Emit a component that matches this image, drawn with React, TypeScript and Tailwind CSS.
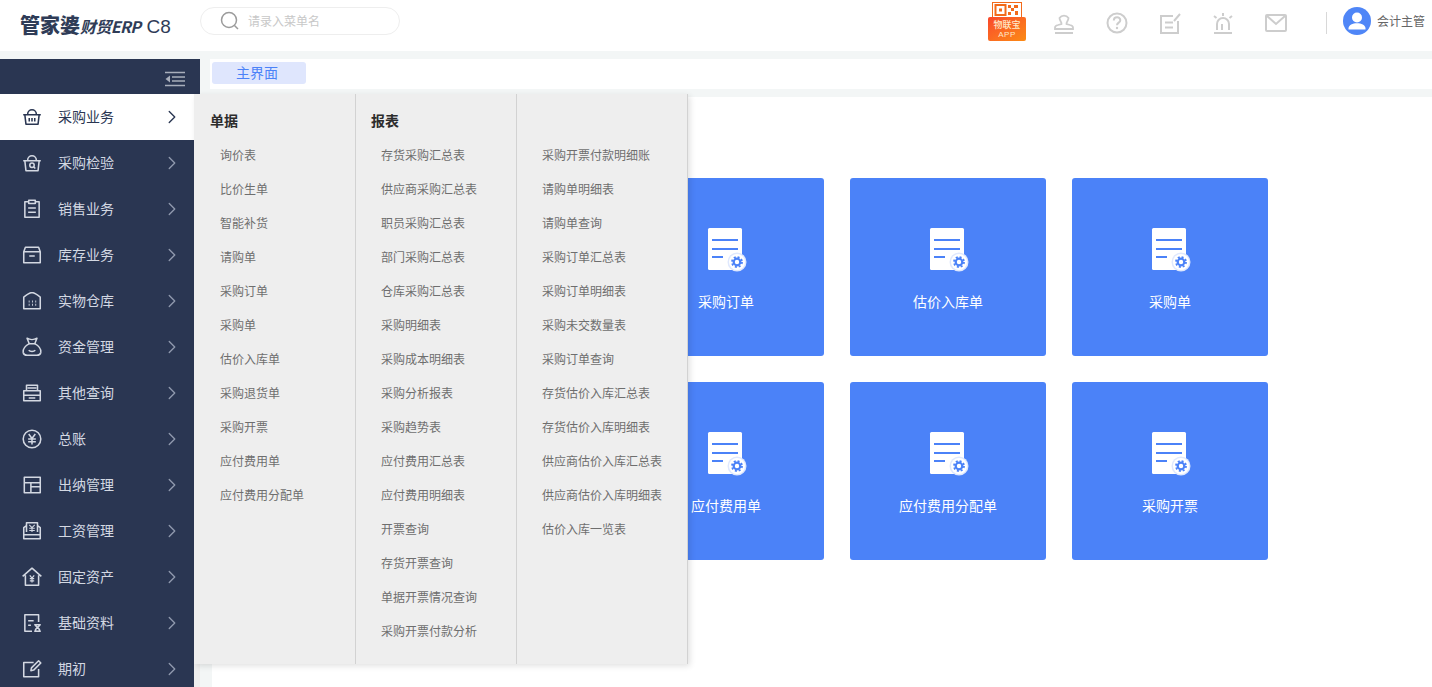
import type { ReactNode } from "react";
import { ChevronRight } from "lucide-react";

const sideIcons: Record<string, ReactNode> = {
  basket: (
    <>
      <path d="M2 8h16M3.500 8l1 8.500h11l1-8.500M6 8c0-6 8-6 8 0" />
      <path d="M7.500 11v3M10 11v3M12.500 11v3" />
    </>
  ),
  basketSearch: (
    <>
      <path d="M2 8h16M3.500 8l1 9h11l1-9M6 8c0-6 8-6 8 0" />
      <circle cx="10" cy="12" r="2" />
      <path d="M11.500 13.500l1.500 1.500" />
    </>
  ),
  clipboard: (
    <>
      <path d="M7 3.500H3.500v14h13v-14H13" />
      <path d="M7 2h6v3H7zM6.500 9h7M6.500 13h7" />
    </>
  ),
  box: <path d="M4 3h12l1.500 4h-15zM2.500 7h15v10h-15zM7.500 11h5" />,
  warehouse: (
    <>
      <path d="M2.500 6.500C5 4.500 7 3 9 2.500h2c2 .5 4 2 6.500 4V17h-15z" />
      <path d="M7 10.500h.8M10 10.500h.8M13 10.500h.8M7 13.500h.8M10 13.500h.8M13 13.500h.8" strokeWidth="1.800" />
    </>
  ),
  bag: (
    <>
      <path d="M5.500 2c2.500 1.500 6.500 1.500 9 0L12.500 7h-5z" />
      <path d="M7.500 7C4 9 1.500 12 2 15c.4 2 2 2.500 3.500 2.500h9c1.500 0 3.100-.5 3.500-2.500.5-3-2-6-5.500-8" />
      <path d="M7 13c1.500 1.500 4.500 1.500 6 0" />
    </>
  ),
  printer: <path d="M5 8V3h10v5M2.500 8h15v9h-15zM2.500 12h15M7 14.500h6M6 5.500h8" />,
  yen: (
    <>
      <circle cx="10" cy="10" r="8" />
      <path d="M7 5.500l3 4 3-4M6.500 10h7M6.500 12.500h7M10 9.500v5.500" />
    </>
  ),
  layout: <path d="M3 3h14.500v14H3zM3 8h14.500M9 8v9M9 11.500h8.500" />,
  salary: (
    <>
      <path d="M5 11V2.500h10V11M5 5L2.500 7v10h15V7L15 5M2.500 13.500h15" />
      <path d="M7.500 4.500l2.500 2.500 2.500-2.500M7.500 7.500h5M7.500 9.500h5M10 7v4" strokeWidth="1" />
    </>
  ),
  house: (
    <>
      <path d="M1.500 9.500L10 2l8.500 7.500M4 8.500V17.500h12V8.500" />
      <path d="M8 8.500l2 2.500 2-2.500M8 11.500h4M8 13.500h4M10 11v4" strokeWidth="1.100" />
    </>
  ),
  docTimer: (
    <>
      <path d="M16 9V2.500H3.500v15H10" />
      <path d="M6.500 8h5M6.500 12h2.500M12 11.500h6M12 17.500h6M13 11.500c0 2 4 2.500 4 6M17 11.500c0 2-4 2.500-4 6" />
    </>
  ),
  edit: (
    <>
      <path d="M16 10v7H2.500V4h9" />
      <path d="M9 11.500l.5-2.500L16 2.500l2 2-6.500 6.500z" />
    </>
  ),
};

const sideItems = [
  ["采购业务", "basket"],
  ["采购检验", "basketSearch"],
  ["销售业务", "clipboard"],
  ["库存业务", "box"],
  ["实物仓库", "warehouse"],
  ["资金管理", "bag"],
  ["其他查询", "printer"],
  ["总账", "yen"],
  ["出纳管理", "layout"],
  ["工资管理", "salary"],
  ["固定资产", "house"],
  ["基础资料", "docTimer"],
  ["期初", "edit"],
];

const billItems = [
  "询价表",
  "比价生单",
  "智能补货",
  "请购单",
  "采购订单",
  "采购单",
  "估价入库单",
  "采购退货单",
  "采购开票",
  "应付费用单",
  "应付费用分配单",
];

const reportItems = [
  "存货采购汇总表",
  "供应商采购汇总表",
  "职员采购汇总表",
  "部门采购汇总表",
  "仓库采购汇总表",
  "采购明细表",
  "采购成本明细表",
  "采购分析报表",
  "采购趋势表",
  "应付费用汇总表",
  "应付费用明细表",
  "开票查询",
  "存货开票查询",
  "单据开票情况查询",
  "采购开票付款分析",
];

const moreReportItems = [
  "采购开票付款明细账",
  "请购单明细表",
  "请购单查询",
  "采购订单汇总表",
  "采购订单明细表",
  "采购未交数量表",
  "采购订单查询",
  "存货估价入库汇总表",
  "存货估价入库明细表",
  "供应商估价入库汇总表",
  "供应商估价入库明细表",
  "估价入库一览表",
];

const cards = ["采购订单", "估价入库单", "采购单", "应付费用单", "应付费用分配单", "采购开票"];

function SideIcon({ name }: { name: string }) {
  return (
    <svg
      viewBox="0 0 20 20"
      fill="none"
      stroke="currentColor"
      strokeWidth="1.400"
      strokeLinejoin="round"
      className="h-[22px] w-[22px] shrink-0"
    >
      {sideIcons[name]}
    </svg>
  );
}

function DocIcon() {
  return (
    <svg viewBox="0 0 40 44" className="ml-[2px] h-[44px] w-[40px]">
      <rect x="1" y="0" width="34" height="42" rx="1.500" fill="#fff" />
      <path d="M5 12h26M5 21h26M5 29h11" stroke="#4b82f8" strokeWidth="2" />
      <circle cx="30" cy="34" r="9.500" fill="#dfe8fd" />
      <circle cx="30" cy="34" r="8" fill="#fff" />
      <circle cx="30" cy="34" r="3.300" fill="none" stroke="#4b82f8" strokeWidth="2.200" />
      <circle cx="30" cy="34" r="5" fill="none" stroke="#4b82f8" strokeWidth="1.800" strokeDasharray="2 1.930" />
    </svg>
  );
}

function HeaderIcon({ children }: { children: ReactNode }) {
  return (
    <svg
      viewBox="0 0 24 24"
      fill="none"
      stroke="#cdcdcd"
      strokeWidth="2"
      className="h-[24px] w-[24px] shrink-0"
    >
      {children}
    </svg>
  );
}

function MenuColumn({
  title,
  items,
  width,
  headIndent,
  indent,
}: {
  title: string;
  items: string[];
  width: string;
  headIndent: string;
  indent: string;
}) {
  return (
    <div className={`${width} border-r border-[#d2d2d2] pt-[15px]`}>
      <div className={`h-[22px] ${headIndent} text-[14px] leading-[22px] font-bold text-[#2c2c2c]`}>{title}&nbsp;</div>
      <ul className={`mt-[7px] ${indent}`}>
        {items.map((item) => (
          <li key={item} className="h-[34px] text-[12px] leading-[34px] whitespace-nowrap text-[#6e6e6e]">
            {item}
          </li>
        ))}
      </ul>
    </div>
  );
}

export default function App() {
  return (
    <div
      className="relative flex h-[687px] w-[1432px] flex-col overflow-hidden bg-[#f3f6f6]"
      style={{ fontFamily: '"Noto Sans CJK SC", "Liberation Sans", sans-serif' }}
    >
      <header className="flex h-[51px] shrink-0 items-center bg-white">
        <div className="ml-[20px] flex w-[180px] items-baseline whitespace-nowrap text-[#2f3c57]">
          <span className="text-[20px] leading-none font-black">管家婆</span>
          <span className="text-[16px] leading-none font-bold tracking-[-0.6px] italic">财贸ERP</span>
          <span className="ml-[6px] text-[19px] leading-none font-normal" style={{ fontFamily: '"Liberation Sans", sans-serif' }}>
            C8
          </span>
        </div>
        <div className="mb-[9px] flex h-[28px] w-[200px] items-center rounded-full border border-[#eee] pl-[19px]">
          <svg viewBox="0 0 20 20" fill="none" stroke="#9b9b9b" strokeWidth="1.500" className="h-[20px] w-[20px]">
            <circle cx="9" cy="9" r="7.500" />
            <path d="M14.500 14.500l3.500 3.500" />
          </svg>
          <span className="ml-[8px] text-[12px] text-[#c8c8c8]">请录入菜单名</span>
        </div>
        <div className="mb-[10px] ml-[588px] flex h-[38px] w-[38px] shrink-0 flex-col items-center">
          <div className="flex h-[17px] w-[30px] shrink-0 items-start justify-center bg-[#f26a1b] pt-[1px]">
            <svg viewBox="0 0 28 15" className="h-[15px] w-[28px]">
              <rect width="28" height="15" fill="#fff" />
              <rect x="2.500" y="2" width="10" height="10" fill="none" stroke="#f26a1b" strokeWidth="2" />
              <rect x="6" y="5.500" width="3" height="3" fill="#f26a1b" />
              <path d="M15 2h3v3h-3zM21 2h4v3h-4zM18 5h3v3h-3zM22 8h3v4h-3zM15 9h3v3h-3z" fill="#f26a1b" />
            </svg>
          </div>
          <div className="-mt-[2px] flex h-[24px] w-[38px] shrink-0 flex-col items-center justify-center rounded-[2px] bg-gradient-to-br from-[#f9452a] to-[#fb8a12] text-[#ffe9c8]">
            <span className="text-[9px] leading-[11px] font-medium">物联宝</span>
            <span className="text-[8px] leading-[9px] tracking-[0.5px]" style={{ fontFamily: '"Liberation Sans", sans-serif' }}>
              APP
            </span>
          </div>
        </div>
        <div className="mb-[6px] ml-[26px] flex items-center gap-[29px]">
          <HeaderIcon>
            <path d="M3 22h18" />
            <path d="M3 18h18v-1.500c0-1.500-1-2-3-2.500l-3.500-1c-.5-2 2-3 2-6a5.500 5.500 0 0 0-9 0c0 3 2.500 4 2 6L6 14c-2 .5-3 1-3 2.500z" strokeWidth="1.800" />
          </HeaderIcon>
          <HeaderIcon>
            <circle cx="12" cy="12" r="9.500" />
            <path d="M8.800 9.500c0-4.300 6.500-4.300 6.500-.300 0 2.500-3.300 2.300-3.300 5" />
            <circle cx="12" cy="17" r="1.200" fill="#cdcdcd" stroke="none" />
          </HeaderIcon>
          <HeaderIcon>
            <path d="M15 5H3v17h17V10" />
            <path d="M7 11.500h8M7 16.500h8M16 10l6-7" />
          </HeaderIcon>
          <HeaderIcon>
            <path d="M3 22h18M6 19v-6a6 6 0 0 1 12 0v6M11 19v-6" />
            <path d="M12 2v3M3 5l2.500 2M21 5l-2.500 2" />
          </HeaderIcon>
          <HeaderIcon>
            <rect x="2" y="4" width="20" height="16" rx="1" />
            <path d="M3 5l9 8 9-8" />
          </HeaderIcon>
        </div>
        <div className="mb-[5px] ml-[38px] h-[22px] w-px bg-[#d8d8d8]" />
        <div className="mb-[9px] ml-[16px] flex items-center">
          <svg viewBox="0 0 28 28" className="h-[28px] w-[28px]">
            <circle cx="14" cy="14" r="14" fill="#4f86f7" />
            <circle cx="14" cy="10.500" r="5" fill="#fff" />
            <path d="M5.500 21.500c0-7 17-7 17 0v1H5.500z" fill="#fff" />
          </svg>
          <span className="ml-[6px] text-[12px] whitespace-nowrap text-[#666]">会计主管</span>
        </div>
      </header>

      <div className="mt-[8px] flex min-h-0 flex-1">
        <aside className="flex w-[200px] shrink-0 flex-col">
          <div className="flex h-[35px] items-center justify-end bg-[#2a3652] pr-[15px]">
            <svg viewBox="0 0 20 16" fill="none" stroke="#a8aebb" strokeWidth="1.500" className="mt-[4px] h-[16px] w-[20px]">
              <path d="M0 1.500h20M7 6h13M7 10h13M0 14.500h20" />
              <path d="M5 4.500v7L0.500 8z" fill="#a8aebb" stroke="none" />
            </svg>
          </div>
          <nav className="min-h-0 flex-1 overflow-hidden border-r-[6px] border-[#eeeeee]">
            <ul className="bg-[#2a3652]">
              {sideItems.map(([label, icon], i) => (
                <li
                  key={label}
                  className={
                    i === 0
                      ? "flex h-[46px] items-center bg-white pl-[21px] text-[#2a3652]"
                      : "flex h-[46px] items-center pl-[21px] text-[#d3d8e2]"
                  }
                >
                  <SideIcon name={icon} />
                  <span className="mb-[2px] ml-[15px] w-[103px] text-[14px]">{label}</span>
                  <ChevronRight
                    className={i === 0 ? "h-[22px] w-[22px] text-[#2a3652]" : "h-[22px] w-[22px] text-[#8f99ad]"}
                    strokeWidth={1.500}
                  />
                </li>
              ))}
            </ul>
          </nav>
        </aside>

        <main className="flex min-w-0 flex-1 flex-col">
          <div className="ml-[10px] flex h-[30px] shrink-0 items-center bg-white pl-[2px]">
            <div className="mb-[2px] h-[22px] w-[94px] rounded-[3px] bg-[#dfe6fd] pr-[4px] text-center text-[14px] leading-[20px] text-[#4b82f8]">
              主界面
            </div>
          </div>
          <div className="mt-[8px] ml-[12px] min-h-0 flex-1 bg-white pt-[81px] pl-[416px]">
            <div className="grid w-[640px] grid-cols-3 gap-[26px]">
              {cards.map((card) => (
                <div key={card} className="flex h-[178px] w-[196px] flex-col items-center rounded-[3px] bg-[#4b82f8] pt-[50px]">
                  <DocIcon />
                  <span className="mt-[19px] text-[14px] leading-[20px] text-white">{card}</span>
                </div>
              ))}
            </div>
          </div>
        </main>
      </div>

      <div className="absolute top-[94px] left-[194px] flex h-[570px] w-[494px] bg-[#eeeeee] shadow-[2px_2px_6px_rgba(0,0,0,0.12)]">
        <MenuColumn title="单据" items={billItems} width="w-[162px]" headIndent="pl-[16px]" indent="pl-[26px]" />
        <MenuColumn title="报表" items={reportItems} width="w-[161px]" headIndent="pl-[15px]" indent="pl-[25px]" />
        <MenuColumn title="" items={moreReportItems} width="w-[171px]" headIndent="pl-[15px]" indent="pl-[25px]" />
      </div>
    </div>
  );
}
